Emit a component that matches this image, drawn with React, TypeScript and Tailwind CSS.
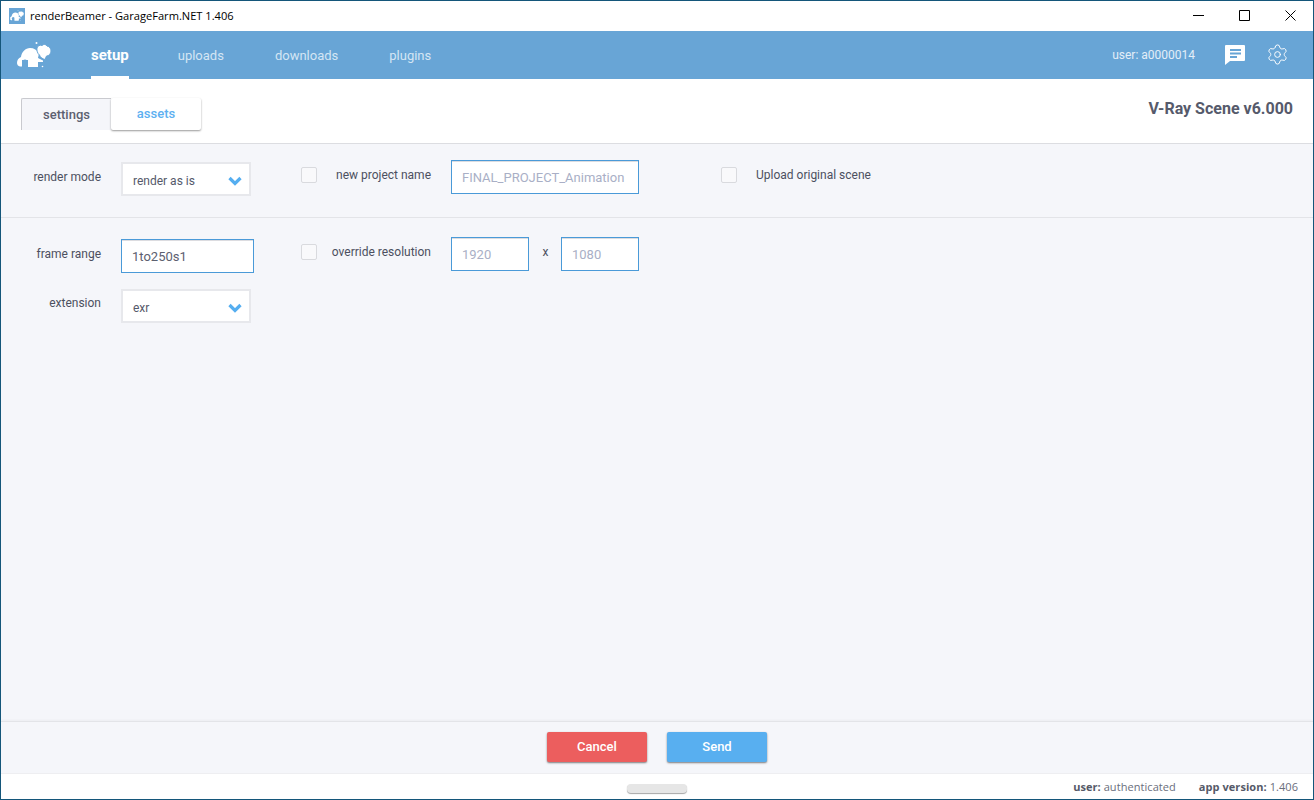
import { Settings } from "lucide-react";

const NAV = [
  { label: "setup", active: true, className: "ml-[40px]" },
  { label: "uploads", active: false, className: "ml-[49px]" },
  { label: "downloads", active: false, className: "ml-[51px]" },
  { label: "plugins", active: false, className: "ml-[51px]" },
];

const Logo = ({ className }: { className: string }) => (
  <svg viewBox="0 0 34 26" className={className}>
    <path d="M0 21c0-3 1.500-5 4-6 .5-5 4.500-9 9-9 4 0 7 2 9 5l-1 5 5 2.500V20h-5v5H11v-7H5v3z" fill="#fff" />
    <path d="M5 24v-3c0-2 1.500-3.500 3-3.500S11 19 11 21v3z" fill="#68a5d6" />
    <path d="M0 21c0 1.500 1 3 3 3.500h2V21z" fill="#fff" />
    <path d="M11 17l5-4 5 4v8H11z" fill="#fff" />
    <path d="M20 6c.5-2 3-3.500 5-2.500C26.500 2 29 2 30 4c2.500.5 4 2.500 4 5s-2 5-4.500 5l-1.500 3.500c-2.500-.5-5-2.500-5.500-4.500C20.500 11.500 19.500 8.500 20 6z" fill="#fff" stroke="#68a5d6" strokeWidth="1" />
    <circle cx="19.500" cy="1" r="1" fill="#fff" />
    <circle cx="25.500" cy="24.500" r=".8" fill="#fff" />
  </svg>
);

const Chevron = () => (
  <svg viewBox="0 0 14 10" className="w-[14px] h-[10px]" fill="none">
    <path d="M1.500 2 7 7.500 12.500 2" stroke="#55aef0" strokeWidth="3.200" />
  </svg>
);

const Label = ({ text, className }: { text: string; className: string }) => (
  <span className={`text-[12px] leading-[14px] text-[#4c5060] ${className}`}>{text}</span>
);

const Select = ({ value, className }: { value: string; className: string }) => (
  <div className={`flex items-center justify-between w-[130px] h-[34px] bg-white border-2 border-[#e7e8ec] pt-[4px] pl-[10px] pr-[7px] ${className}`}>
    <span className="text-[12px] text-[#55596a]">{value}</span>
    <Chevron />
  </div>
);

const TextBox = ({ value, className, dark }: { value: string; className: string; dark?: boolean }) => (
  <div className={`flex items-center h-[34px] bg-white border border-[#4a9ad8] shadow-[inset_0_1px_0_#dcdce0] pl-[10px] pt-[1px] text-[13px] ${dark ? "text-[#5c6070]" : "text-[#a9afc6]"} ${className}`}>
    {value}
  </div>
);

const Checkbox = ({ className }: { className: string }) => (
  <div className={`w-4 h-4 rounded-[2px] bg-[#f9f9fb] border border-[#d9dade] ${className}`} />
);

const Tab = ({ label, active }: { label: string; active?: boolean }) => (
  <div
    className={
      active
        ? "flex items-center justify-center w-[90px] h-[32px] text-[13px] font-medium text-[#5c6070] bg-[#f5f6fa] border-l border-t border-[#c9cacf] rounded-tl-[2px]"
        : "flex items-center justify-center w-[90px] h-[32px] text-[13px] font-medium text-[#5db0f1] bg-white rounded-[2px] shadow-[0_1px_2px_rgba(0,0,0,0.4)]"
    }
  >
    {label}
  </div>
);

export default function App() {
  return (
    <div className="flex flex-col h-screen w-full border border-[#14567a] bg-[#f5f6fa] overflow-hidden font-['Roboto',sans-serif]">
      {/* title bar */}
      <div className="flex items-center h-[30px] bg-white shrink-0">
        <div className="flex items-center justify-center ml-2 mb-[1px] w-4 h-4 bg-[#68a5d6]">
          <Logo className="w-[14px] h-[11px]" />
        </div>
        <span className="ml-[5px] text-[11.100px] text-black font-['Open_Sans',sans-serif]">renderBeamer - GarageFarm.NET 1.406</span>
        <div className="ml-auto flex items-center gap-[35px] mr-[17px] mb-[2px]">
          <svg viewBox="0 0 11 11" className="w-[11px] h-[11px]" stroke="#000" fill="none">
            <path d="M0 5.500h11" />
          </svg>
          <svg viewBox="0 0 11 11" className="w-[11px] h-[11px]" stroke="#000" fill="none">
            <path d="M.5.500h10v10H.5z" />
          </svg>
          <svg viewBox="0 0 11 11" className="w-[11px] h-[11px]" stroke="#000" fill="none">
            <path d="M.5.500l10 10M10.500.500l-10 10" />
          </svg>
        </div>
      </div>

      {/* nav */}
      <div className="flex items-stretch h-[48px] bg-[#68a5d6] shrink-0">
        <div className="flex items-center pl-[16px]">
          <Logo className="w-[34px] h-[26px]" />
        </div>
        {NAV.map((n) => (
          <div
            key={n.label}
            className={`flex items-center pt-[4px] border-b-[3px] ${n.className} ${
              n.active ? "border-white text-white font-bold text-[15px]" : "border-transparent text-[#d4e5f4] text-[13px]"
            }`}
          >
            {n.label}
          </div>
        ))}
        <span className="ml-auto self-center text-[12px] text-[#e3eef8]">user: a0000014</span>
        <svg viewBox="0 0 22 22" className="self-center ml-[29px] w-[22px] h-[22px]">
          <path d="M2 1h18a1 1 0 0 1 1 1v14a1 1 0 0 1-1 1H6l-5 4V2a1 1 0 0 1 1-1z" fill="#fff" />
          <path d="M6 6h11M6 9.500h11M6 13h7" stroke="#68a5d6" strokeWidth="2" />
        </svg>
        <Settings className="self-center ml-[20px] mr-[24px] mb-[2px] w-[23px] h-[23px] text-white" strokeWidth={1} />
      </div>

      {/* tabs */}
      <div className="flex items-center justify-between h-[65px] bg-white border-b border-[#dcdde1] shrink-0 pl-[20px] pr-[20px]">
        <div className="flex mt-[6px]">
          <Tab label="settings" active />
          <Tab label="assets" />
        </div>
        <span className="text-[16px] font-bold text-[#565a6b] mb-[4px]">V-Ray Scene v6.000</span>
      </div>

      {/* first row */}
      <div className="flex items-start h-[74px] shrink-0 border-b border-[#e3e4e8]">
        <Label text="render mode" className="w-[100px] text-right mt-[26px]" />
        <Select value="render as is" className="ml-[20px] mt-[18px]" />
        <Checkbox className="ml-[50px] mt-[23px]" />
        <Label text="new project name" className="w-[114px] text-right mt-[24px]" />
        <TextBox value="FINAL_PROJECT_Animation" className="w-[188px] ml-[20px] mt-[16px]" />
        <Checkbox className="ml-[82px] mt-[23px]" />
        <Label text="Upload original scene" className="ml-[19px] mt-[24px]" />
      </div>

      {/* second row */}
      <div className="flex-1 flex items-start">
        <div className="flex flex-col items-start">
          <div className="flex items-start h-[50px]">
            <Label text="frame range" className="w-[100px] text-right mt-[29px]" />
            <TextBox value="1to250s1" dark className="w-[133px] ml-[20px] mt-[21px]" />
          </div>
          <div className="flex items-start mt-[21px]">
            <Label text="extension" className="w-[100px] text-right mt-[7px]" />
            <Select value="exr" className="ml-[20px]" />
          </div>
        </div>
        <div className="flex items-start mt-[19px]">
          <Checkbox className="ml-[47px] mt-[7px]" />
          <Label text="override resolution" className="w-[114px] text-right mt-[8px]" />
          <TextBox value="1920" className="w-[78px] ml-[20px]" />
          <span className="text-[12px] text-[#4c5060] w-[32px] text-center pl-[1px] mt-[6px]">x</span>
          <TextBox value="1080" className="w-[78px]" />
        </div>
      </div>

      {/* actions */}
      <div className="flex items-center justify-center gap-5 h-[52px] shrink-0 border-t border-[#e3e4e8] shadow-[0_-1px_2px_rgba(0,0,0,0.04)]">
        <button className="w-[100px] h-[30px] mb-[2px] rounded-[2px] bg-[#ec5e5e] text-white text-[13px] font-medium shadow-[0_1px_2px_rgba(0,0,0,0.5)]">Cancel</button>
        <button className="w-[100px] h-[30px] mb-[2px] rounded-[2px] bg-[#58aff0] text-white text-[13px] font-medium shadow-[0_1px_2px_rgba(0,0,0,0.5)]">Send</button>
      </div>

      {/* status bar */}
      <div className="relative flex items-center justify-end h-[26px] shrink-0 bg-white pt-[2px] pr-[15px] text-[11px] tracking-[0.06px] text-[#6a6e7c] font-['Open_Sans',sans-serif] border-t border-[#eeeef1]">
        <div className="absolute left-[626px] top-[10px] w-[60px] h-[9px] rounded-[4px] bg-[#e6e6e6] shadow-[0_1px_1px_rgba(0,0,0,0.35)]" />
        <span><b className="text-[#555968]">user:</b> authenticated</span>
        <span className="ml-[23px]"><b className="text-[#555968]">app version:</b> 1.406</span>
      </div>
    </div>
  );
}
